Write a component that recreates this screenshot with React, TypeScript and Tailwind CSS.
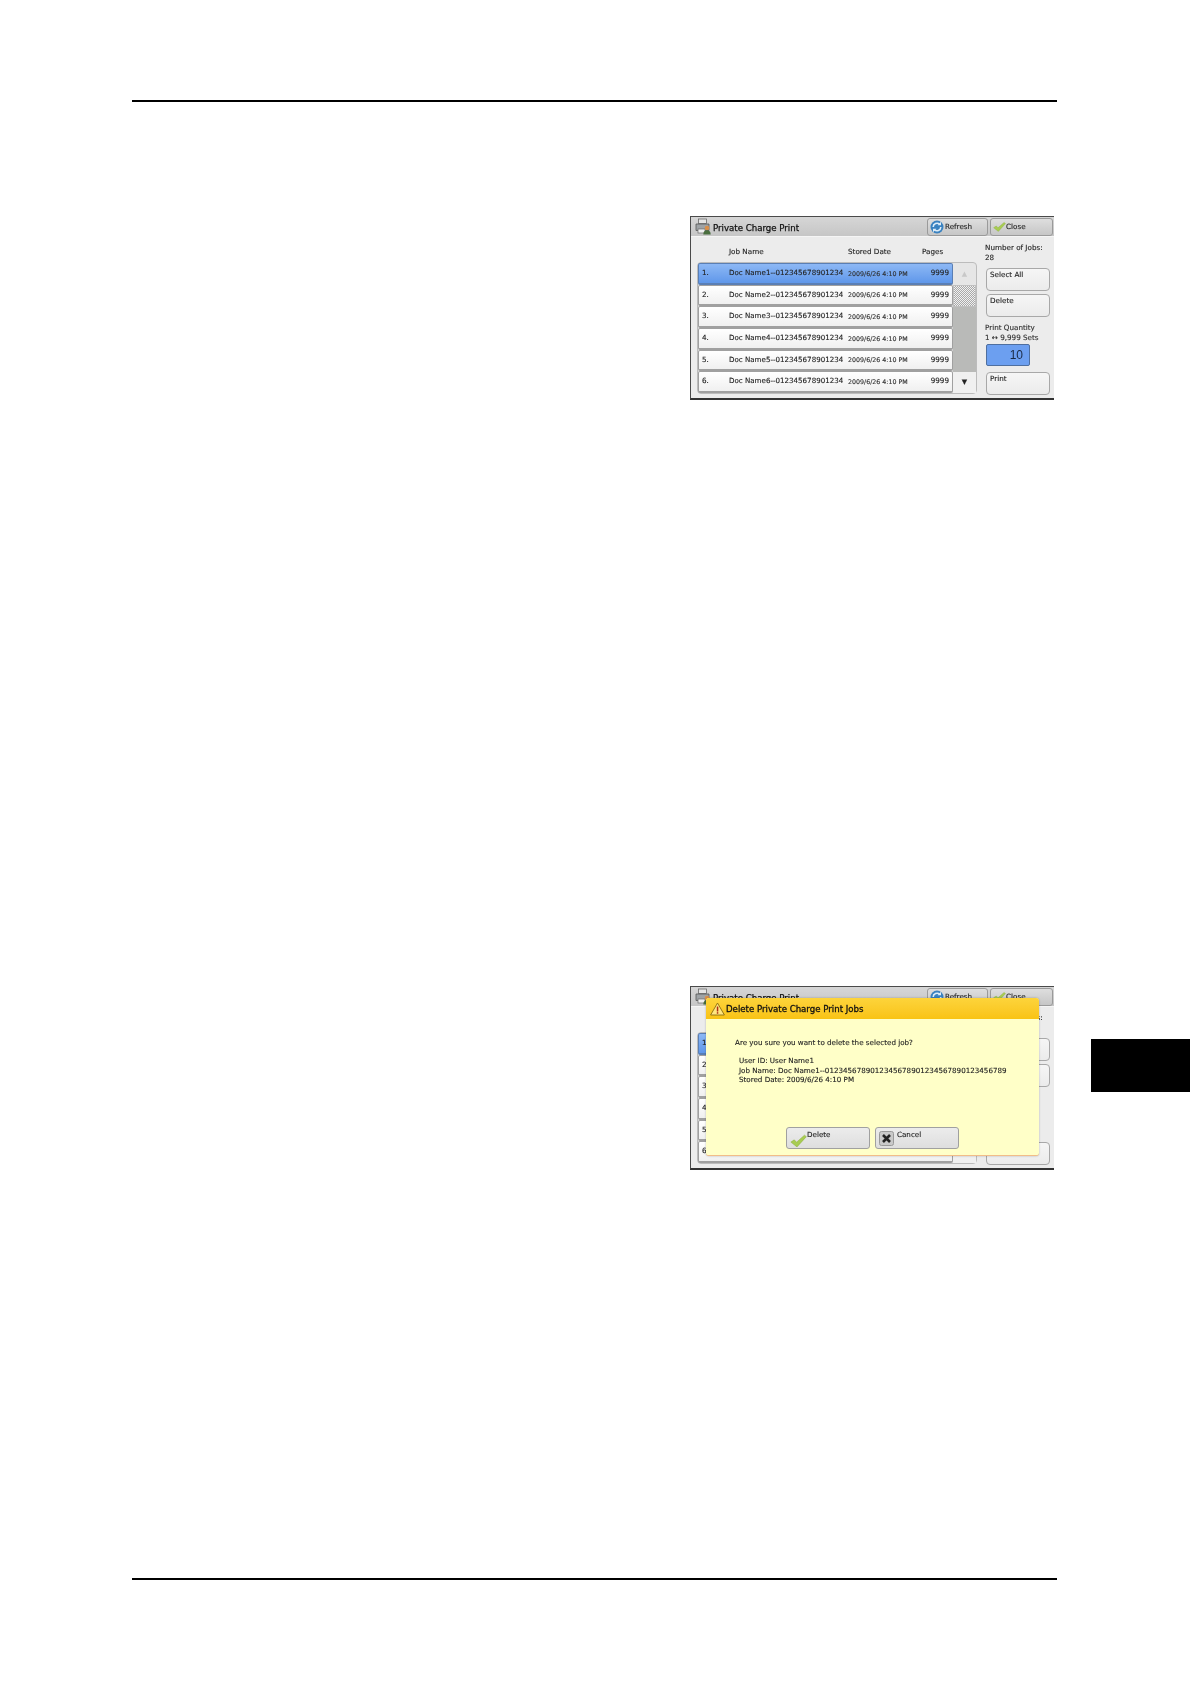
import React from 'react';

const jobs = [1, 2, 3, 4, 5, 6];

const PrinterIcon = () => (
    <svg width="17" height="17" viewBox="0 0 17 17" className="shrink-0">
        <rect x="3.5" y="1" width="8" height="4.5" fill="#e4e4e4" stroke="#6a6a6a" strokeWidth="0.8" />
        <path d="M1 6h13v6.5H1z" fill="#9fa3a6" stroke="#555" strokeWidth="0.8" />
        <rect x="3" y="11" width="7" height="4" fill="#efefef" stroke="#6a6a6a" strokeWidth="0.7" />
        <circle cx="12" cy="10" r="2.3" fill="#d98f4a" />
        <path d="M8.3 16.5c0-3 1.6-4.2 3.7-4.2s3.7 1.2 3.7 4.2z" fill="#4a6f3f" />
    </svg>
);

const RefreshIcon = () => (
    <svg width="14" height="14" viewBox="0 0 14 14" className="shrink-0">
        <circle cx="7" cy="7" r="6.5" fill="#3a82c0" />
        <path d="M3.2 7a3.8 3.8 0 0 1 6.5-2.6M10.8 7a3.8 3.8 0 0 1-6.5 2.6" fill="none" stroke="#dcecf8" strokeWidth="1.6" />
        <path d="M11 1.8v3.4H7.6zM3 12.2V8.8h3.4z" fill="#dcecf8" />
    </svg>
);

const CheckIcon = ({ size }: { size: number }) => (
    <svg width={size} height={size} viewBox="0 0 16 16" className="shrink-0">
        <path d="M.8 9.5L4 7.4l2.2 2.2L13.6 3l1.8 1.4L6.6 14z" fill="#a8cc52" stroke="#8bb03e" strokeWidth="0.5" />
    </svg>
);

const CloseBoxIcon = () => (
    <svg width="15" height="15" viewBox="0 0 15 15" className="shrink-0">
        <rect x="0.5" y="0.5" width="14" height="14" rx="2" fill="#c9c9c9" stroke="#999" />
        <path d="M4 4l7 7M11 4l-7 7" stroke="#222" strokeWidth="2.6" />
    </svg>
);

const WarningIcon = () => (
    <svg width="15" height="14" viewBox="0 0 15 14" className="shrink-0">
        <path d="M7.5 1L14.4 13H.6z" fill="#ffe680" stroke="#8a6d10" strokeWidth="0.9" />
        <rect x="6.8" y="4.5" width="1.5" height="5" fill="#b02a10" />
        <rect x="6.8" y="10.2" width="1.5" height="1.5" fill="#b02a10" />
    </svg>
);

const SideButton = ({ label, className }: { label: string; className: string }) => (
    <div
        className={`ml-[1px] w-[64px] h-[23px] pl-[3px] pt-[1px] leading-[10px] rounded-[4px] border border-[#a8a8a8] bg-gradient-to-b from-[#f6f6f6] to-[#ebebeb] text-[#222] ${className}`}
    >
        {label}
    </div>
);

const JobRow = ({ no, selected }: { no: number; selected: boolean }) => (
    <div
        className={`flex-1 flex items-center rounded-[2px] border border-b-2 ${
            selected
                ? 'bg-gradient-to-b from-[#8db8f5] to-[#5f97ea] border-[#5a7fb5]'
                : 'bg-gradient-to-b from-[#ffffff] to-[#f0f0f0] border-[#a0a0a0]'
        }`}
    >
        <span className="w-[30px] pl-[3px] text-[#222]">{no}.</span>
        <span className="w-[119px] text-[7.1px] text-[#222] whitespace-nowrap">
            Doc Name{no}--012345678901234
        </span>
        <span className="w-[70px] text-[6.3px] text-[#333] whitespace-nowrap">
            2009/6/26 4:10 PM
        </span>
        <span className="w-[31px] text-right text-[#222]">9999</span>
    </div>
);

const ChargePanel = ({ children }: { children?: React.ReactNode }) => (
    <div className="relative w-[364px] h-[184px] flex flex-col border-t border-l border-[#4a4a4a] border-b-2 border-b-[#333] bg-[#ececec] text-[7.2px] blur-[0.35px] [-webkit-text-stroke:0.12px_#222]">
        <div className="h-[20px] flex items-center pl-[4px] pr-[1px] bg-gradient-to-b from-[#d6d6d6] to-[#c6c6c6] border-b border-[#f5f5f5]">
            <PrinterIcon />
            <span className="ml-[1px] pt-[3px] text-[8.6px] text-[#111] [-webkit-text-stroke:0.25px_#111]">
                Private Charge Print
            </span>
            <div className="ml-auto flex items-center gap-[2px]">
                <div className="w-[61px] h-[18px] flex items-center pl-[2px] rounded-[3px] border border-[#9a9a9a] bg-gradient-to-b from-[#dedede] to-[#c6c6c6] text-[#222]">
                    <RefreshIcon />
                    <span className="pt-[1px] ml-[1px]">Refresh</span>
                </div>
                <div className="w-[63px] h-[18px] flex items-center pl-[2px] rounded-[3px] border border-[#9a9a9a] bg-gradient-to-b from-[#dedede] to-[#c6c6c6] text-[#222]">
                    <CheckIcon size={13} />
                    <span className="pt-[1px]">Close</span>
                </div>
            </div>
        </div>
        <div className="flex-1 flex pl-[6px]">
            <div className="w-[280px] flex flex-col">
                <div className="h-[25px] flex items-center pt-[6px] text-[#222]">
                    <span className="w-[119px] ml-[32px]">Job Name</span>
                    <span className="w-[74px]">Stored Date</span>
                    <span>Pages</span>
                </div>
                <div className="h-[132px] flex rounded-[4px] border border-[#bcbcbc] bg-[#e6e6e6]">
                    <div className="w-[255px] flex flex-col">
                        {jobs.map((no) => (
                            <JobRow key={no} no={no} selected={no === 1} />
                        ))}
                    </div>
                    <div className="flex-1 flex flex-col">
                        <div className="h-[22px] flex items-center justify-center text-[7px] text-[#c8c8c8] [-webkit-text-stroke:0]">▲</div>
                        <div className="h-[22px] bg-[repeating-conic-gradient(#a9a9a9_0%_25%,#f0f0f0_0%_50%)] bg-[length:2px_2px] border border-[#c0c0c0]" />
                        <div className="flex-1 bg-[#b9bab8]" />
                        <div className="h-[21px] flex items-center justify-center text-[7px] text-[#222] bg-[#f0f0f0]">▼</div>
                    </div>
                </div>
            </div>
            <div className="ml-[8px] w-[66px] flex flex-col pt-[6px] text-[#222]">
                <p className="h-[20px] leading-[10px]">
                    Number of Jobs:
                    <br />
                    28
                </p>
                <SideButton label="Select All" className="mt-[5px]" />
                <SideButton label="Delete" className="mt-[3px]" />
                <p className="mt-[6px] h-[20px] leading-[9.5px] text-[#333] whitespace-nowrap">
                    Print Quantity
                    <br />1 ↔ 9,999 Sets
                </p>
                <div className="mt-[1px] ml-[1px] w-[44px] h-[22px] flex items-center justify-end pr-[6px] rounded-[2px] border border-[#4f6f9f] bg-[#6c9ff0] font-['Liberation_Sans',sans-serif] text-[12px] text-[#1a2a44] [-webkit-text-stroke:0]">
                    10
                </div>
                <SideButton label="Print" className="mt-[6px]" />
            </div>
        </div>
        {children}
    </div>
);

const DeleteDialog = () => (
    <div className="absolute left-[15px] top-[11px] w-[333px] h-[158px] flex flex-col rounded-[3px] border-b border-[#f2bd88] bg-[#ffffc8] shadow-[0_0_2px_rgba(0,0,0,0.3)]">
        <div className="h-[21px] flex items-center pl-[4px] gap-[1px] rounded-t-[3px] bg-gradient-to-b from-[#fdd43a] to-[#f9c312] text-[8.6px] text-[#111] [-webkit-text-stroke:0.3px_#111]">
            <WarningIcon />
            <span className="pt-[2px]">Delete Private Charge Print Jobs</span>
        </div>
        <div className="flex-1 flex flex-col pl-[29px] pt-[19px] text-[7.15px] text-[#222]">
            <p className="leading-[10px]">Are you sure you want to delete the selected job?</p>
            <div className="mt-[8px] pl-[4px] leading-[9.5px] whitespace-nowrap">
                <p>User ID: User Name1</p>
                <p>Job Name: Doc Name1--0123456789012345678901234567890123456789</p>
                <p>Stored Date: 2009/6/26 4:10 PM</p>
            </div>
            <div className="mt-auto mb-[6px] -ml-[29px] pl-[80px] flex gap-[5px] text-[#222]">
                <div className="w-[84px] h-[22px] flex items-start pl-[3px] rounded-[3px] border border-[#a0a0a0] bg-gradient-to-b from-[#ececec] to-[#dedede]">
                    <div className="pt-[4px]">
                        <CheckIcon size={17} />
                    </div>
                    <span className="pt-[2px] leading-[10px]">Delete</span>
                </div>
                <div className="w-[84px] h-[22px] flex items-center gap-[3px] pl-[3px] rounded-[3px] border border-[#a0a0a0] bg-gradient-to-b from-[#ececec] to-[#dedede]">
                    <CloseBoxIcon />
                    <span className="self-start pt-[2px] leading-[10px]">Cancel</span>
                </div>
            </div>
        </div>
    </div>
);

export default function App() {
    return (
        <div className="w-[1190px] h-[1684px] bg-white flex flex-col font-['DejaVu_Sans',sans-serif]">
            <div className="mt-[100px] ml-[132px] w-[925px] h-[2px] bg-black" />
            <div className="mt-[114px] ml-[690px]">
                <ChargePanel />
            </div>
            <div className="mt-[586px] ml-[690px] flex items-start">
                <ChargePanel>
                    <DeleteDialog />
                </ChargePanel>
                <div className="mt-[53px] ml-[37px] flex-1 h-[53px] bg-black" />
            </div>
            <div className="mt-[408px] ml-[132px] w-[925px] h-[2px] bg-black" />
        </div>
    );
}
